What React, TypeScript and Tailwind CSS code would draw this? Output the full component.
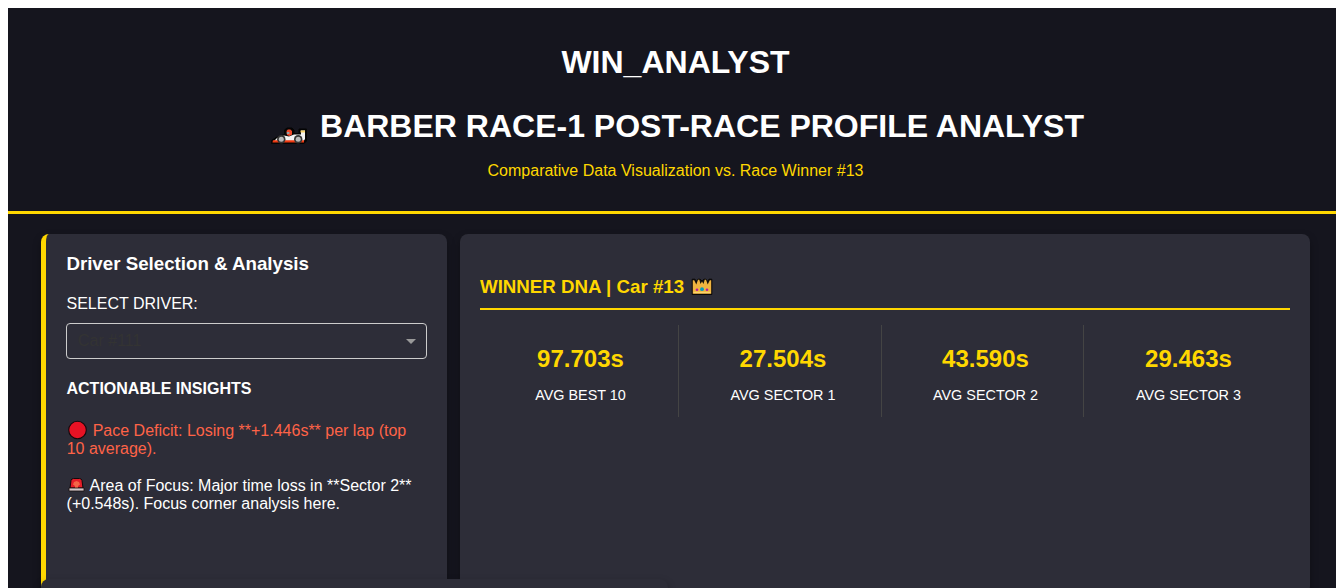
import React from "react";

const stats = [
  { value: "97.703s", label: "AVG BEST 10" },
  { value: "27.504s", label: "AVG SECTOR 1" },
  { value: "43.590s", label: "AVG SECTOR 2" },
  { value: "29.463s", label: "AVG SECTOR 3" },
];

function RaceCar() {
  return (
    <svg viewBox="0 0 36 18" className="mr-[13px] mt-[19px] h-[18px] w-9 shrink-0" aria-hidden="true">
      <path d="M0.5 16.5V13.5L5 10.5L13.5 7.5V3L16 1H21L23 3V6.5H28V2H35.5V14L33 16.5Z" fill="#050505" stroke="#050505" strokeLinejoin="round" />
      <path d="M3 14L6 11L13 8.5L18 9.5L23 7.5H30V3.5H34V12L32 15H3Z" fill="#f4f4f4" />
      <path d="M2 13.2H33V15.6H1.5Z" fill="#ef3a12" />
      <path d="M15.5 4L16.8 2.5H19.3L21 4V7.5L18.5 9L16 8Z" fill="#ef4a2c" />
      <path d="M15.8 5H18.4V7H15.8Z" fill="#8fa1a8" />
      <path d="M29.5 3.5H34V5.5H29.5Z" fill="#f7d36b" />
      <circle cx="10.3" cy="12.2" r="4.2" fill="#353535" />
      <circle cx="10.3" cy="12.2" r="2.5" fill="#b9b9b9" />
      <circle cx="27.2" cy="12.2" r="4.2" fill="#353535" />
      <circle cx="27.2" cy="12.2" r="2.5" fill="#b9b9b9" />
    </svg>
  );
}

function Crown() {
  return (
    <svg viewBox="0 0 22 18" className="ml-[7px] mt-[2px] h-[18px] w-[22px]" aria-hidden="true">
      <path d="M1.2 1.2H4L5.5 3.5L7 1.2H9L11 3L13 1.2H15L16.5 3.5L18 1.2H20.8V16.5H1.2Z" fill="#17120c" stroke="#0a0808" strokeLinejoin="round" />
      <path d="M1.8 2.2H3.2L5.3 6.5L7 1.8H8.3L9.5 6L11 3.5L12.5 6L13.7 1.8H15L16.7 6.5L18.8 2.2H20.2V15.7H1.8Z" fill="#f0b440" />
      <path d="M2.5 14.5H19.5" stroke="#fbd46c" strokeWidth="1.4" />
      <circle cx="11" cy="11.2" r="1.9" fill="#079dbd" />
      <circle cx="6" cy="11.7" r="1.3" fill="#b51ba3" />
      <circle cx="16" cy="11.7" r="1.3" fill="#b51ba3" />
    </svg>
  );
}

function RedDot() {
  return (
    <svg viewBox="0 0 20 20" className="mr-[5px] -mt-2 -mb-2 inline-block h-5 w-[21px] align-[4px]" aria-hidden="true">
      <circle cx="10" cy="10" r="8.8" fill="#e81224" stroke="#15080c" strokeWidth="1.1" />
    </svg>
  );
}

function Siren() {
  return (
    <svg viewBox="0 0 18 16" className="mr-[5px] -mt-[2px] inline-block h-4 w-[18px] align-[-2px]" aria-hidden="true">
      <path d="M3 11L4 3.5Q4.5 1.5 6.5 1.5H12.5Q14.5 1.5 15 3.5L16 11Z" fill="#e51d28" stroke="#100b0d" />
      <path d="M7 5L9.5 4L12 5L13 7.5L11 9V11H8V9L6 7.5Z" fill="#f56546" />
      <path d="M2 11H17V14H2Z" fill="#d3c5c7" stroke="#17100f" strokeWidth=".8" />
    </svg>
  );
}

export default function App() {
  return (
    <div className="h-[588px] overflow-hidden bg-white pt-2 pl-2 font-['Liberation_Sans',Arial,sans-serif] text-base leading-[18px] text-white">
      <div className="h-full bg-[#15151e]">
        <header className="flex h-[206px] flex-col items-center border-b-[3px] border-[#ffd700] pl-[7px] pt-[36px] text-center">
          <h1 className="text-[32px] leading-[37px] font-bold">WIN_ANALYST</h1>
          <h1 className="mt-[27px] flex h-[37px] items-center pl-[4px] text-[32px] leading-[37px] font-bold">
            <RaceCar />
            BARBER RACE-1 POST-RACE PROFILE ANALYST
          </h1>
          <p className="mt-[17px] text-[#ffd700]">Comparative Data Visualization vs. Race Winner #13</p>
        </header>

        <main className="pl-[33px] pr-[26px] pt-5">
          <div className="flex gap-[13px]">
            <section className="h-[360px] w-[406px] shrink-0 rounded-lg border-l-[5px] border-[#ffd700] bg-[#2d2d38] px-5 pt-[19px] shadow-[0_4px_8px_rgba(0,0,0,0.3)]">
              <h3 className="pl-[0.4px] text-[18.72px] leading-[21px] font-bold">Driver Selection &amp; Analysis</h3>
              <label className="mt-[21px] block pl-[0.5px]">SELECT DRIVER:</label>
              <div className="mt-[10px] flex h-9 w-[361px] items-center justify-between rounded border border-[#cccccc] pl-[11px] pr-[10px] text-[#333333]">
                <span>Car #111</span>
                <svg viewBox="0 0 10 5" className="h-[5px] w-[10px]" aria-hidden="true">
                  <path d="M0 0H10L5 5Z" fill="#999999" />
                </svg>
              </div>
              <h4 className="mt-[21px] pl-[0.5px] font-bold">ACTIONABLE INSIGHTS</h4>
              <p className="mt-6 h-9 pl-[0.7px] text-[#ff6347]">
                <RedDot />Pace Deficit: Losing **+1.446s** per lap (top<br />10 average).
              </p>
              <p className="mt-[19px] pl-[0.6px]">
                <Siren />Area of Focus: Major time loss in **Sector 2**<br />(+0.548s). Focus corner analysis here.
              </p>
            </section>

            <section className="h-[360px] w-[850px] shrink-0 rounded-lg bg-[#2d2d38] px-5 pt-[42px] shadow-[0_4px_8px_rgba(0,0,0,0.3)]">
              <h3 className="flex h-[34px] items-start border-b-2 border-[#ffd700] text-[18.72px] leading-[21px] font-bold text-[#ffd700]">
                WINNER DNA | Car #13
                <Crown />
              </h3>
              <div className="mt-[15px] grid grid-cols-4">
                {stats.map((stat) => (
                  <div key={stat.label} className="mr-[3.5px] ml-1 h-[92px] border-r border-[#444444] pt-5 pr-[1px] text-center last:border-r-0">
                    <div className="text-2xl leading-[27px] font-bold text-[#ffd700]">{stat.value}</div>
                    <div className="mt-[15px] text-[14.4px] leading-4">{stat.label}</div>
                  </div>
                ))}
              </div>
            </section>
          </div>
          <section className="relative -mt-[15px] h-[60px] w-[627px] rounded-lg bg-[#2d2d38] shadow-[0_4px_8px_rgba(0,0,0,0.3)]" />
        </main>
      </div>
    </div>
  );
}
